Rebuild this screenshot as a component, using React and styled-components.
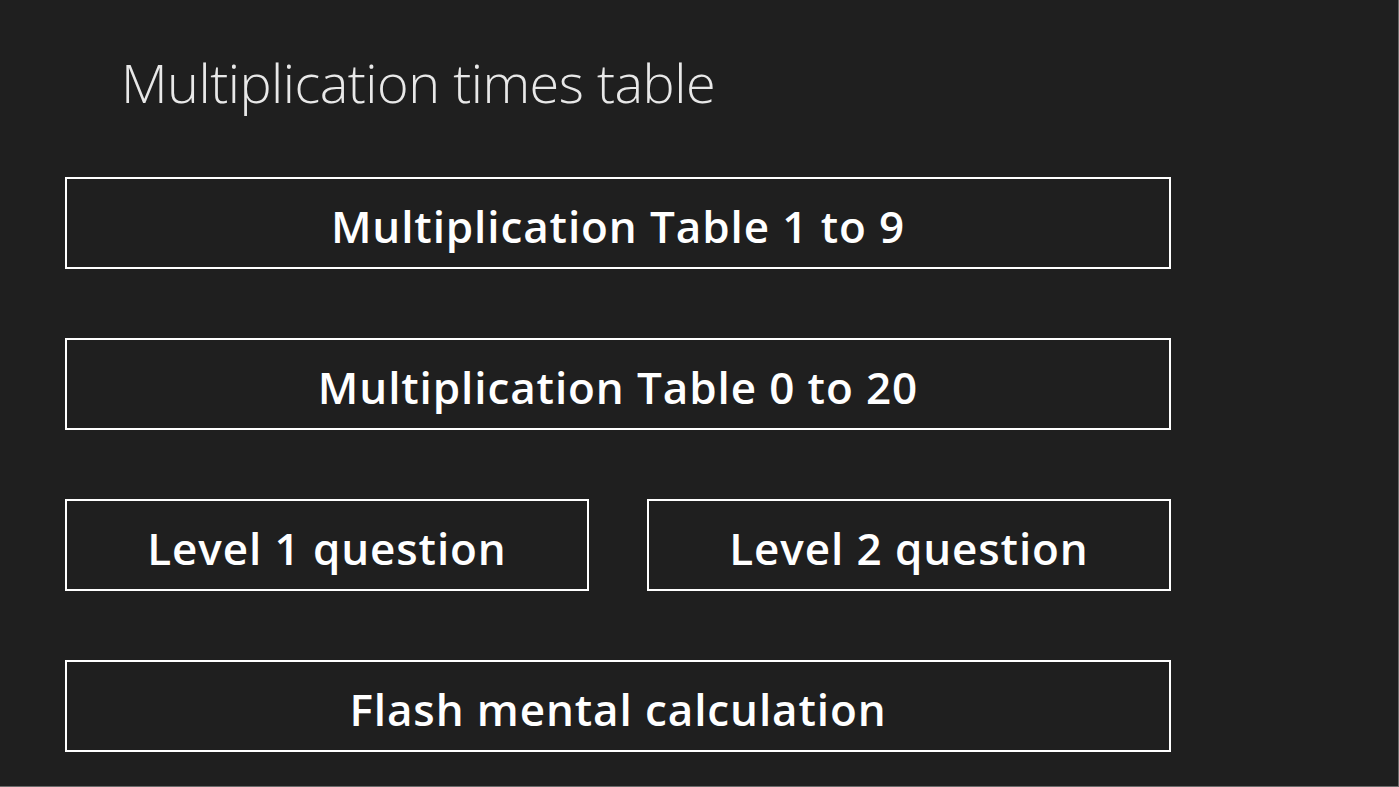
import React from "react";
import styled, { createGlobalStyle } from "styled-components";

const GlobalStyle = createGlobalStyle`
  html, body {
    margin: 0;
    padding: 0;
    background: #1f1f1f;
  }
`;

const App = () => {
  return (
    <>
      <GlobalStyle />
      <Page>
        <Title>Multiplication times table</Title>
        <Menu>
          <MenuButton>Multiplication Table 1 to 9</MenuButton>
          <MenuButton>Multiplication Table 0 to 20</MenuButton>
          <Row>
            <MenuButton>Level 1 question</MenuButton>
            <MenuButton>Level 2 question</MenuButton>
          </Row>
          <MenuButton>Flash mental calculation</MenuButton>
        </Menu>
      </Page>
    </>
  );
};

export default App;

const Page = styled.div`
  box-sizing: border-box;
  width: 1399px;
  height: 787px;
  background: #1f1f1f;
  border-right: 1px solid #6b6b6b;
  border-bottom: 1px solid #6b6b6b;
  padding: 0 0 0 65px;
  overflow: hidden;
`;

const Title = styled.h1`
  margin: 0;
  padding: 47px 0 0 56px;
  height: 177px;
  box-sizing: border-box;
  font-family: "Open Sans", "Noto Sans", sans-serif;
  font-weight: 300;
  font-size: 54px;
  line-height: 70px;
  color: #e8e8e8;
  letter-spacing: -0.5px;
`;

const Menu = styled.div`
  display: flex;
  flex-direction: column;
  gap: 69px;
  width: 1106px;
`;

const Row = styled.div`
  display: grid;
  grid-template-columns: 1fr 1fr;
  gap: 58px;
`;

const MenuButton = styled.button`
  box-sizing: border-box;
  height: 92px;
  width: 100%;
  background: transparent;
  border: 2.5px solid #ffffff;
  color: #ffffff;
  font-family: "Open Sans", "Noto Sans", sans-serif;
  font-weight: 600;
  font-size: 44px;
  letter-spacing: 0.9px;
  padding: 5px 0 0;
  cursor: pointer;
`;
